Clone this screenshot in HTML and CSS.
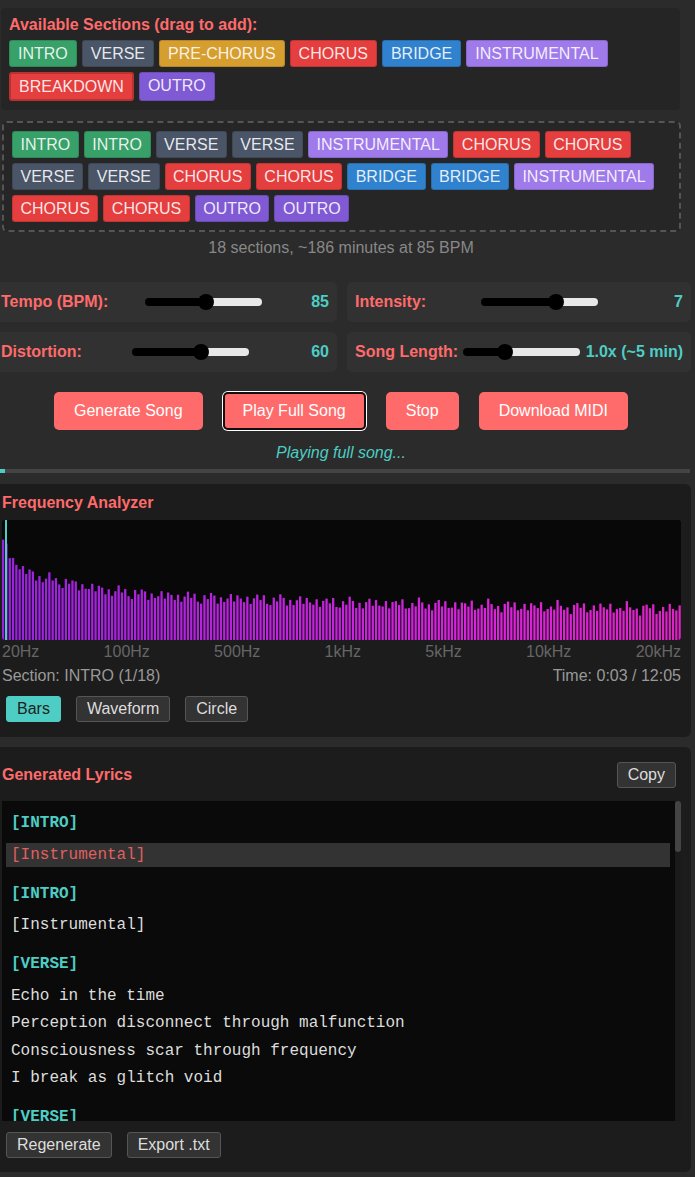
FILE: index.html
```html
<!DOCTYPE html>
<html lang="en">
<head>
<meta charset="utf-8">
<title>Song Builder</title>
<link rel="stylesheet" href="styles.css">
</head>
<body>
<div class="builder">
  <h3 class="builder-title">Available Sections (drag to add):</h3>
  <div class="chips">
    <span class="chip intro">INTRO</span>
    <span class="chip verse">VERSE</span>
    <span class="chip prechorus">PRE-CHORUS</span>
    <span class="chip chorus">CHORUS</span>
    <span class="chip bridge">BRIDGE</span>
    <span class="chip instrumental">INSTRUMENTAL</span>
    <span class="chip breakdown">BREAKDOWN</span>
    <span class="chip outro">OUTRO</span>
  </div>
</div>
<div class="arrangement">
  <div class="chips">
    <span class="chip intro">INTRO</span>
    <span class="chip intro">INTRO</span>
    <span class="chip verse">VERSE</span>
    <span class="chip verse">VERSE</span>
    <span class="chip instrumental">INSTRUMENTAL</span>
    <span class="chip chorus">CHORUS</span>
    <span class="chip chorus">CHORUS</span>
    <span class="chip verse">VERSE</span>
    <span class="chip verse">VERSE</span>
    <span class="chip chorus">CHORUS</span>
    <span class="chip chorus">CHORUS</span>
    <span class="chip bridge">BRIDGE</span>
    <span class="chip bridge">BRIDGE</span>
    <span class="chip instrumental">INSTRUMENTAL</span>
    <span class="chip chorus">CHORUS</span>
    <span class="chip chorus">CHORUS</span>
    <span class="chip outro">OUTRO</span>
    <span class="chip outro">OUTRO</span>
  </div>
</div>
<div class="stats">18 sections, ~186 minutes at 85 BPM</div>

<div class="controls">
  <div class="control">
    <span class="control-label">Tempo (BPM):</span>
    <input class="slider" type="range" min="60" max="108" value="85" style="--fill:60.5px">
    <span class="control-value">85</span>
  </div>
  <div class="control">
    <span class="control-label">Intensity:</span>
    <input class="slider" type="range" min="1" max="10" value="7" style="--fill:75.3px">
    <span class="control-value">7</span>
  </div>
  <div class="control">
    <span class="control-label">Distortion:</span>
    <input class="slider" type="range" min="0" max="100" value="60" style="--fill:68.6px">
    <span class="control-value">60</span>
  </div>
  <div class="control">
    <span class="control-label">Song Length:</span>
    <input class="slider" type="range" min="0.5" max="2" step="0.1" value="1" style="--fill:41.7px">
    <span class="control-value">1.0x (~5 min)</span>
  </div>
</div>

<div class="actions">
  <button class="btn">Generate Song</button>
  <button class="btn focused">Play Full Song</button>
  <button class="btn">Stop</button>
  <button class="btn">Download MIDI</button>
</div>
<div class="status">Playing full song...</div>
<div class="progress"><div class="progress-fill" style="width:5px"></div></div>

<div class="panel analyzer">
  <h3 class="panel-title">Frequency Analyzer</h3>
  <canvas id="viz" class="viz" width="679" height="120"></canvas>
  <div class="freq-labels">
    <span>20Hz</span><span>100Hz</span><span>500Hz</span><span>1kHz</span><span>5kHz</span><span>10kHz</span><span>20kHz</span>
  </div>
  <div class="viz-info">
    <span>Section: INTRO (1/18)</span>
    <span>Time: 0:03 / 12:05</span>
  </div>
  <div class="mode-row">
    <button class="mini-btn active">Bars</button>
    <button class="mini-btn">Waveform</button>
    <button class="mini-btn">Circle</button>
  </div>
</div>

<div class="panel lyrics">
  <div class="lyrics-head">
    <h3 class="panel-title">Generated Lyrics</h3>
    <button class="mini-btn">Copy</button>
  </div>
  <div class="lyrics-wrap">
    <div class="lyrics-box">
      <div class="lyr-section">
        <div class="lyr-head">[INTRO]</div>
        <div class="lyr-line current">[Instrumental]</div>
      </div>
      <div class="lyr-section">
        <div class="lyr-head">[INTRO]</div>
        <div class="lyr-line">[Instrumental]</div>
      </div>
      <div class="lyr-section">
        <div class="lyr-head">[VERSE]</div>
        <div class="lyr-line">Echo in the time</div>
        <div class="lyr-line">Perception disconnect through malfunction</div>
        <div class="lyr-line">Consciousness scar through frequency</div>
        <div class="lyr-line">I break as glitch void</div>
      </div>
      <div class="lyr-section">
        <div class="lyr-head">[VERSE]</div>
      </div>
    </div>
    <div class="scrollbar"><div class="scrollbar-thumb"></div></div>
  </div>
  <div class="lyrics-actions">
    <button class="mini-btn">Regenerate</button>
    <button class="mini-btn">Export .txt</button>
  </div>
</div>
<script src="script.js"></script>
</body>
</html>
```

FILE: styles.css
```css
* { box-sizing: border-box; }

body {
  margin: 0;
  background: #2b2b2b;
  font-family: "Liberation Sans", Arial, sans-serif;
  font-size: 16px;
  color: #ddd;
  overflow-x: hidden;
}

.builder {
  margin: 8px 15px 0 1px;
  padding: 8px 8px 9px;
  background: #252525;
  border-radius: 4px;
}

.builder-title,
.panel-title {
  margin: 0;
  font-size: 16px;
  line-height: 18px;
  font-weight: bold;
  color: #ff6b6b;
}

.builder-title { margin-bottom: 6px; }

.chips {
  display: flex;
  flex-wrap: wrap;
  gap: 5px;
}

.chip {
  padding: 4px 8px;
  line-height: 17px;
  border: 1px solid rgba(0, 0, 0, 0.15);
  border-radius: 3px;
  color: rgba(255, 255, 255, 0.88);
}

.arrangement .chip { padding: 4px 7.5px; }

.chip.intro { background: #38a169; }
.chip.verse { background: #4a5568; }
.chip.prechorus { background: #d69e2e; }
.chip.chorus { background: #e53e3e; }
.chip.bridge { background: #3182ce; }
.chip.instrumental { background: #9f7aea; }
.chip.breakdown { background: #e53e3e; border: 2px solid #b83232; }
.chip.outro { background: #805ad5; }

.arrangement {
  margin: 11px 14px 0 2px;
  padding: 8px;
  border: 2px dashed #555;
  border-radius: 5px;
  background: #262626;
}

.stats {
  margin: 7px 14px 0 1px;
  text-align: center;
  line-height: 18px;
  color: #888;
}

.controls {
  display: grid;
  grid-template-columns: 1fr 1fr;
  gap: 10px;
  margin: 25px 4px 0 -7px;
}

.control {
  display: flex;
  align-items: center;
  justify-content: space-between;
  padding: 11px 8px;
  background: #313131;
  border-radius: 5px;
  line-height: 18px;
}

.control-label {
  font-weight: bold;
  color: #ff6b6b;
}

.control-value {
  min-width: 30px;
  text-align: right;
  font-weight: bold;
  color: #4ecdc4;
}

.slider {
  -webkit-appearance: none;
  appearance: none;
  width: 117px;
  height: 16px;
  margin: 0;
  background: transparent;
}

.slider::-webkit-slider-runnable-track {
  height: 8px;
  border-radius: 4px;
  background: linear-gradient(to right, #000 var(--fill), #e8e8e8 var(--fill));
}

.slider::-webkit-slider-thumb {
  -webkit-appearance: none;
  appearance: none;
  width: 16px;
  height: 16px;
  margin-top: -4px;
  border-radius: 50%;
  background: #000;
}

.actions {
  display: flex;
  justify-content: center;
  gap: 20px;
  margin: 20px 14px 0 1px;
}

.btn {
  padding: 10px 20px;
  border: none;
  border-radius: 5px;
  background: #ff6b6b;
  color: #fff;
  font-family: "Liberation Sans", Arial, sans-serif;
  font-size: 16px;
  line-height: 18px;
}

.btn.focused {
  box-shadow: inset 0 0 0 2px #101010, 0 0 0 1px #fff;
}

.status {
  margin: 14px 14px 0 1px;
  text-align: center;
  font-style: italic;
  line-height: 18px;
  color: #4ecdc4;
}

.progress {
  margin: 7px 5px 0 0;
  height: 4px;
  background: #444;
}

.progress-fill {
  height: 100%;
  background: #4ecdc4;
}

.panel {
  margin: 11px 4px 0 -8px;
  padding: 10px 10px 15px;
  background: #1c1c1c;
  border-radius: 6px;
}

.analyzer .panel-title { margin-bottom: 8px; }

.viz {
  display: block;
  width: 679px;
  height: 120px;
  background: #080808;
  border-radius: 3px;
}

.freq-labels {
  display: flex;
  justify-content: space-between;
  margin-top: 3px;
  line-height: 18px;
  color: #666;
}

.viz-info {
  display: flex;
  justify-content: space-between;
  margin-top: 6px;
  line-height: 18px;
  color: #999;
}

.mode-row,
.lyrics-actions {
  display: flex;
  gap: 15px;
  margin-top: 11px;
  padding-left: 4px;
}

.mini-btn {
  padding: 3px 10px;
  border: 1px solid #555;
  border-radius: 3px;
  background: #333;
  color: #ddd;
  font-family: "Liberation Sans", Arial, sans-serif;
  font-size: 16px;
  line-height: 18px;
}

.mini-btn.active {
  background: #4ecdc4;
  border-color: #4ecdc4;
  color: #1e1e1e;
}

.panel.lyrics {
  margin-top: 10px;
  padding-bottom: 14px;
}

.lyrics-head {
  display: flex;
  justify-content: space-between;
  align-items: center;
  min-height: 36px;
  margin-bottom: 8px;
}

.lyrics-head .mini-btn { margin-right: 5px; }

.lyrics-wrap {
  position: relative;
}

.lyrics-box {
  display: flex;
  flex-direction: column;
  gap: 15px;
  height: 320px;
  overflow: hidden;
  padding: 10px 11px 10px 4px;
  background: #0a0a0a;
  font-family: "Liberation Mono", "Courier New", monospace;
  font-size: 16px;
}

.scrollbar {
  position: absolute;
  top: 0;
  right: 0;
  width: 6px;
  height: 100%;
  background: #1a1a1a;
}

.scrollbar-thumb {
  height: 51px;
  border-radius: 3px;
  background: #444;
}

.lyr-section {
  display: flex;
  flex-direction: column;
  flex-shrink: 0;
  gap: 3.5px;
}

.lyr-head {
  margin-bottom: 4px;
  padding: 3px 5px;
  line-height: 18px;
  font-weight: bold;
  color: #4ecdc4;
}

.lyr-line {
  padding: 3px 5px;
  line-height: 18px;
  color: #ddd;
  white-space: pre;
}

.lyr-line.current {
  background: #333;
  color: #e06060;
}
```

FILE: script.js
```js
(function () {
  var c = document.getElementById('viz');
  var ctx = c.getContext('2d');
  var W = c.width, H = c.height;
  var pts = [[0,98],[4,92],[10,80],[20,70],[33,64],[50,60],[70,56],[100,50],[150,45],[200,42],[250,41],[340,37],[450,35],[550,33],[679,31]];
  function base(x) {
    for (var k = 1; k < pts.length; k++) {
      if (x <= pts[k][0]) {
        var x0 = pts[k-1][0], y0 = pts[k-1][1], x1 = pts[k][0], y1 = pts[k][1];
        return y0 + (y1 - y0) * (x - x0) / (x1 - x0);
      }
    }
    return 31;
  }
  var bw = 2.3, gap = 1, i = 0;
  for (var x = 0; x < W; x += bw + gap, i++) {
    var j = 4 * Math.sin(i * 2.4) + 2.5 * Math.sin(i * 0.9 + 1.3) + 1.5 * Math.sin(i * 5.1);
    var h = Math.max(4, base(x) + j);
    var f = x / W;
    ctx.fillStyle = 'hsl(' + (278 + f * 30) + ',72%,50%)';
    ctx.fillRect(x, H - h, bw, h);
  }
  ctx.fillStyle = '#4ecdc4';
  ctx.fillRect(3, 0, 2, H);
})();
```
